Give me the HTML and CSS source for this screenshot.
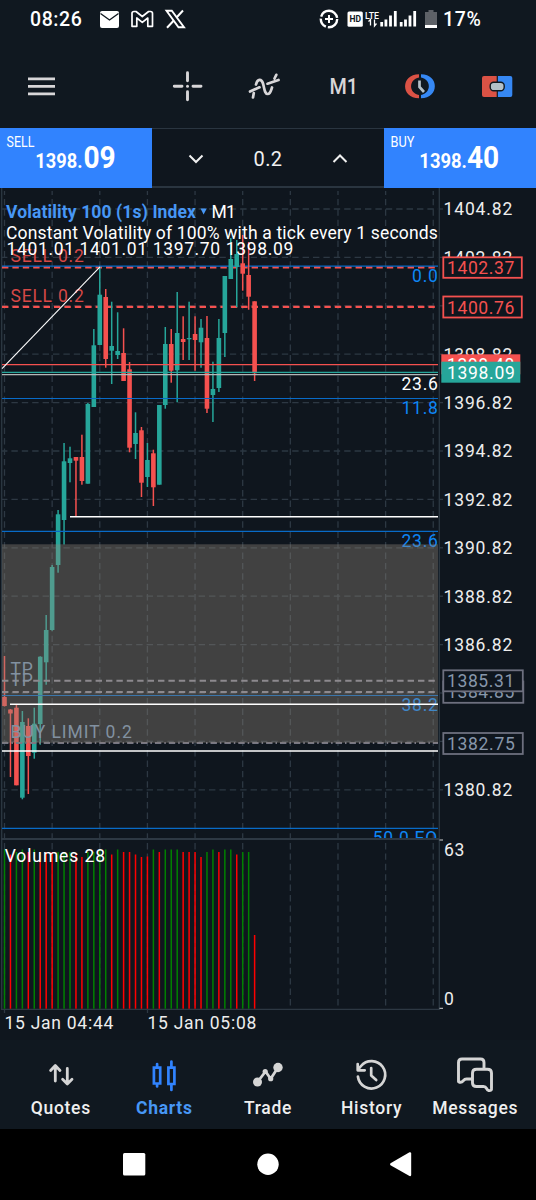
FILE: index.html
```html
<!DOCTYPE html>
<html lang="en">
<head>
    <meta charset="UTF-8">
    <meta name="viewport" content="width=device-width, initial-scale=1.0">
    <title>Charts</title>
    <link rel="stylesheet" href="styles.css">
</head>
<body>
    <div class="status-bar">
        <span class="clock">08:26</span>
        <svg class="notifications" width="86" height="20" viewBox="99 8 86 20">
            <rect x="100" y="10" width="19" height="17" rx="2" fill="#fff"/>
            <path d="M100.500 12.500 L109.500 19 L118.500 12.500" fill="none" stroke="#101820" stroke-width="1.400"/>
            <path d="M132 12.200 Q132 10.500 134 10.500 L136 10.500 L142.300 15.500 L148.600 10.500 L150.500 10.500 Q152.500 10.500 152.500 12.500 L152.500 25.300 L147.800 25.300 L147.800 17 L142.300 21.300 L136.800 17 L136.800 25.300 L132 25.300 Z" fill="none" stroke="#fff" stroke-width="1.700" stroke-linejoin="round"/>
            <path d="M166.500 9.800 H171.800 L184 26.200 H178.500 Z" fill="none" stroke="#fff" stroke-width="1.900"/>
            <path d="M183 9.500 L176.300 16.800 M173.800 19.500 L167 26.800" stroke="#fff" stroke-width="2"/>
        </svg>
        <svg class="signals" width="122" height="20" viewBox="318 8 122 20">
            <circle cx="329" cy="18" r="8.200" fill="none" stroke="#fff" stroke-width="2.400" stroke-dasharray="14 2 10 2 22 1.500"/>
            <path d="M325 18 H333 M329 14 V22" stroke="#fff" stroke-width="2"/>
            <rect x="347.500" y="10.500" width="15.300" height="15.300" rx="1.500" fill="#fff"/>
            <text x="355.200" y="21" class="hd">HD</text>
            <text x="365" y="17.800" class="lte" textLength="14" lengthAdjust="spacingAndGlyphs">LTE</text>
            <path d="M370.500 24.500 V18.500 L368.500 20.500 M374.500 18.500 V25 L376.500 22.500" fill="none" stroke="#fff" stroke-width="1.300"/>
            <path d="M381.700 25.500 V21 M385.900 25.500 V18.500 M390.500 25.500 V14.500 M395.300 25.500 V10 M401.200 25.500 V21 M405.500 25.500 V18.500 M410 25.500 V14.500 M414.700 25.500 V10" stroke="#fff" stroke-width="2.800"/>
            <path d="M425 11 H428.500 V9 H433.500 V11 H437 V24 H425 Z" fill="#5d6167"/>
            <rect x="425" y="24" width="12" height="3" fill="#fff"/>
        </svg>
        <span class="battery">17%</span>
    </div>

    <div class="toolbar">
        <svg width="28" height="32" viewBox="28 70 28 32">
            <path d="M28 78.900 H55 M28 86.400 H55 M28 93.900 H55" stroke="#d8d6d8" stroke-width="2.700"/>
        </svg>
        <svg width="32" height="32" viewBox="172 70 32 32">
            <path d="M187.500 72.700 V80.700 M187.500 91.700 V99.700 M174.300 86.300 H182 M193 86.300 H201" stroke="#d8d6d8" stroke-width="2.900" stroke-linecap="round"/>
            <circle cx="187.500" cy="86.300" r="1.500" fill="#d8d6d8"/>
        </svg>
        <svg width="34" height="32" viewBox="247 70 34 32">
            <path d="M250 91.500 L259.500 87.300 M253.800 93 L253 97.500 M256 84.500 C257.500 78.500 261.500 78.500 263 83.500 C264.500 88.500 264.500 94 267.800 94 C270.300 94 271 90.500 272 87.500 M267.500 83.700 L278.500 80 M274.500 78.500 L276.300 74.800" fill="none" stroke="#d8d6d8" stroke-width="2.700" stroke-linecap="round"/>
        </svg>
        <span class="timeframe">M1</span>
        <svg width="32" height="32" viewBox="404 70 32 32">
            <path d="M419 74.200 C400.500 74.200 400.500 98.300 419 98.300 V95 C408.500 93 408.500 79.500 419 77.500 Z" fill="#db5245"/>
            <path d="M421 74.200 C439.500 74.200 439.500 98.300 421 98.300 V95 C431.500 93 431.500 79.500 421 77.500 Z" fill="#3688f4"/>
            <path d="M419.500 80.500 V87 L424 92" fill="none" stroke="#b4c0c8" stroke-width="2.700"/>
        </svg>
        <svg width="32" height="32" viewBox="481 70 32 32">
            <path d="M496.700 76 H484 Q482 76 482 78 V95 Q482 97 484 97 H496.700 Z" fill="#db5245"/>
            <path d="M497.900 76 H510.300 Q512.300 76 512.300 78 V95 Q512.300 97 510.300 97 H497.900 Z" fill="#3688f4"/>
            <rect x="490.200" y="82.200" width="14" height="8.500" rx="3.500" fill="#b4c0c8" stroke="#101820" stroke-width="1.400"/>
        </svg>
    </div>

    <div class="trade-bar">
        <svg class="deal" width="152" height="60" viewBox="0 128 152 60">
            <text class="deal-label" x="6" y="147.300" textLength="28" lengthAdjust="spacingAndGlyphs">SELL</text>
            <text class="deal-price" x="35" y="167.900" textLength="47.500" lengthAdjust="spacingAndGlyphs">1398.</text>
            <text class="deal-pips" x="83.500" y="167.900" textLength="32.500" lengthAdjust="spacingAndGlyphs">09</text>
        </svg>
        <div class="lot">
            <svg width="16" height="12" viewBox="0 0 16 12"><path d="M1.500 2.500 L8 9 L14.500 2.500"/></svg>
            <span>0.2</span>
            <svg width="16" height="12" viewBox="0 0 16 12"><path d="M1.500 9 L8 2.500 L14.500 9"/></svg>
        </div>
        <svg class="deal" width="152" height="60" viewBox="384 128 152 60">
            <text class="deal-label" x="390" y="147.300" textLength="24" lengthAdjust="spacingAndGlyphs">BUY</text>
            <text class="deal-price" x="419" y="167.900" textLength="48" lengthAdjust="spacingAndGlyphs">1398.</text>
            <text class="deal-pips" x="467" y="167.900" textLength="32.500" lengthAdjust="spacingAndGlyphs">40</text>
        </svg>
    </div>

    <svg class="chart" width="536" height="852" viewBox="0 188 536 852">
        <defs>
            <clipPath id="pane"><rect x="0" y="188" width="439" height="650"/></clipPath>
        </defs>
        <g id="grid" class="grid"></g>
        <g class="frame">
            <path d="M1.700 188 V1009.300"/>
            <path d="M439.300 188 V1009.300"/>
            <path d="M1 838.900 H439" stroke-width="2"/>
            <path d="M1 1009.300 H440 M4.500 1009 V1013 M147.500 1009 V1013"/>
        </g>
        <path d="M439.500 840 H443 M439.500 1008.300 H443" stroke="#d0d0d0"/>

        <g id="volumes"></g>
        <g clip-path="url(#pane)">
            <!-- pending and open positions -->
            <path class="position" d="M2 267.400 H438 M2 306.900 H438"/>
            <path class="fib" d="M2 266.200 H438"/>
            <g class="label sell">
                <text x="10.500" y="262.300" textLength="74">SELL 0.2</text>
                <text x="10.500" y="301.500" textLength="74">SELL 0.2</text>
            </g>
            <g id="candles"></g>
            <path class="fib" d="M2 398.500 H438 M2 531.300 H438 M2 695.500 H438 M2 828.300 H438"/>
            <path class="ask" d="M2 364.600 H438"/>
            <path class="bid" d="M2 372.300 H438"/>
            <path d="M2 374.700 H438" stroke="#b4b8b8" stroke-width="1.300"/>
            <g class="label fib-label">
                <text x="438.500" y="281.500">0.0</text>
                <text x="438.500" y="413.900">11.8</text>
                <text x="438.500" y="546.500">23.6</text>
                <text x="438.500" y="711">38.2</text>
                <text x="438" y="843.500">50.0 EQ</text>
            </g>
            <path class="stops" d="M2 680.700 H438 M2 692 H438"/>
            <path class="limit" d="M2 743 H438"/>
            <rect class="zone" x="2" y="544.300" width="436" height="198.500"/>
            <g class="label order">
                <text x="10.500" y="674.700">TP</text>
                <text x="10.500" y="686.300">TP</text>
                <text x="10.500" y="738" textLength="122">BUY LIMIT 0.2</text>
            </g>
            <path class="level" d="M70 516.700 H438 M10 704.200 H438 M2 751 H438"/>
            <path d="M2 368.700 L100 266.800" stroke="#fff" stroke-width="1.100"/>
            <text class="label white" x="438.500" y="390.300" text-anchor="end">23.6</text>
        </g>

        <text class="symbol" x="6" y="217.500" textLength="190">Volatility 100 (1s) Index</text>
        <path d="M200.500 208.500 H206.800 L203.600 214.500 Z" fill="#4797f5"/>
        <text class="label white" x="211.500" y="217.500" textLength="25">M1</text>
        <text class="label white" x="6" y="239.300" textLength="432.500">Constant Volatility of 100% with a tick every 1 seconds</text>
        <text class="label white" x="6.500" y="254.700" textLength="287.500">1401.01 1401.01 1397.70 1398.09</text>
        <text class="label white" x="4.700" y="861.500" textLength="101">Volumes 28</text>

        <g id="scale" class="label scale"></g>
        <g class="label scale">
            <text x="444" y="856.300">63</text>
            <text x="444" y="1005">0</text>
            <text x="4.500" y="1029" textLength="109.500">15 Jan 04:44</text>
            <text x="147.500" y="1029" textLength="109.500">15 Jan 05:08</text>
        </g>

        <g class="label tag">
            <g class="tag-sell">
                <rect x="443.300" y="257.300" width="78.500" height="20.500"/>
                <text x="447" y="274" textLength="68">1402.37</text>
                <rect x="443.300" y="296.500" width="78.500" height="21"/>
                <text x="447" y="313.500" textLength="68">1400.76</text>
            </g>
            <rect x="441.300" y="354.300" width="79" height="20" fill="#f5514f"/>
            <text x="447" y="371" textLength="68" class="white">1398.40</text>
            <rect x="441.300" y="361.700" width="79" height="21" fill="#26a69a"/>
            <text x="447" y="378.500" textLength="68.500" class="white">1398.09</text>
            <g class="tag-order">
                <rect x="443.300" y="681.500" width="80" height="21.300"/>
                <text x="447" y="698.300" textLength="68">1384.85</text>
                <rect x="443.300" y="670.300" width="79.500" height="21"/>
                <text x="447" y="687.200" textLength="68">1385.31</text>
                <rect x="443.300" y="733" width="79.500" height="21"/>
                <text x="447" y="750" textLength="68.500">1382.75</text>
            </g>
        </g>
    </svg>

    <div class="tabs">
        <div class="tab">
            <svg width="40" height="40" viewBox="40.700 1055 40 40"><path d="M55 1081 V1066 M50.300 1070.500 L55 1065.500 L59.700 1070.500 M67 1068.500 V1084 M62.300 1079.300 L67 1084 L71.700 1079.300" stroke-width="2.800"/></svg>
            <span>Quotes</span>
        </div>
        <div class="tab active">
            <svg width="40" height="40" viewBox="144.300 1055 40 40"><path d="M154.200 1067.700 H160.500 V1083.500 H154.200 Z M168.700 1067.700 H174.700 V1084 H168.700 Z M157.400 1064 V1067 M157.400 1084 V1086.500 M171.700 1061.500 V1067 M171.700 1084.500 V1090" stroke-width="2.700" stroke-linecap="butt"/></svg>
            <span>Charts</span>
        </div>
        <div class="tab">
            <svg width="40" height="40" viewBox="248 1055 40 40"><path d="M257.500 1082 L265.500 1071.500 L270.700 1078.700 L278 1067.500" stroke-width="2.800"/><circle class="dot" cx="257.500" cy="1082" r="4.500"/><circle class="dot" cx="278" cy="1067.500" r="4.700"/><circle class="dot" cx="265.200" cy="1071.500" r="2.600"/><circle class="dot" cx="270.700" cy="1078.700" r="2.600"/></svg>
            <span>Trade</span>
        </div>
        <div class="tab">
            <svg width="40" height="40" viewBox="351.800 1055 40 40"><path d="M357.700 1076.500 A13.700 13.700 0 1 0 360.800 1066 L357.500 1070 M357.500 1064 V1070.300 H364.500 M371 1068 V1075.500 L376 1080" stroke-width="2.700"/></svg>
            <span>History</span>
        </div>
        <div class="tab">
            <svg width="40" height="40" viewBox="455 1055 40 40"><path d="M472 1079 H466.500 Q464.500 1079 463.500 1080.500 Q461 1083.500 458.500 1081.500 V1062.500 Q458.500 1059 462 1059 H480.500 Q484 1059 484 1062.500 V1069 M476.500 1069.300 H487.500 Q491.500 1069.300 491.500 1073 V1088 Q492 1091 488.500 1090.500 C486 1089.500 487 1086.500 483.500 1086.500 H476.500 Q472.500 1086.500 472.500 1083 V1073 Q472.500 1069.300 476.500 1069.300 Z" stroke-width="2.900"/></svg>
            <span>Messages</span>
        </div>
    </div>

    <div class="system-nav">
        <svg width="24" height="26" viewBox="0 0 24 26"><rect x="1" y="2" width="22.300" height="22.500" rx="1.500"/></svg>
        <svg width="24" height="26" viewBox="0 0 24 26"><circle cx="12" cy="13.200" r="10.700"/></svg>
        <svg width="24" height="26" viewBox="1.500 0 24 26"><path d="M2 12.300 L21 1.300 Q22.700 1 22.700 2.500 V24 Q22.700 25.500 21 25 L2 14.200 Q1 13.200 2 12.300 Z"/></svg>
    </div>

    <script src="script.js"></script>
</body>
</html>
```

FILE: styles.css
```css
body {
    margin: 0;
    width: 536px;
    height: 1200px;
    display: flex;
    flex-direction: column;
    overflow: hidden;
    background-color: #0f161e;
    color: #ffffff;
    font-family: Roboto, sans-serif;
}
svg {
    display: block;
    flex-shrink: 0;
    overflow: visible;
}
.status-bar {
    display: flex;
    align-items: center;
    height: 36px;
    box-sizing: border-box;
    padding: 1px 54px 0 30px;
    background-color: #101820;
    font-size: 19.5px;
    font-weight: 500;
}
.clock {
    width: 69px;
    padding-top: 2px;
    letter-spacing: 0.6px;
}
.signals {
    margin-left: auto;
}
.battery {
    width: 39px;
    margin-left: 3px;
    padding-top: 2px;
    letter-spacing: 0.7px;
}
.hd {
    font-size: 8.5px;
    font-weight: 700;
    fill: #101820;
    text-anchor: middle;
}
.lte {
    font-size: 8.5px;
    font-weight: 500;
    fill: #ffffff;
}
.toolbar {
    display: flex;
    align-items: center;
    height: 92px;
    box-sizing: border-box;
    padding: 8px 23px 0 28px;
    background-color: #101820;
}
.toolbar svg:nth-child(2) {
    margin-left: 116px;
}
.toolbar svg:nth-child(3) {
    margin-left: 43px;
}
.toolbar svg:nth-child(5) {
    margin-left: 48px;
}
.toolbar svg:nth-child(6) {
    margin-left: 45px;
}
.timeframe {
    width: 28px;
    margin-left: 47px;
    font-size: 22px;
    font-weight: 500;
    color: #d8d6d8;
    transform: scaleX(0.9);
}
.trade-bar {
    display: flex;
    height: 60px;
}
.deal {
    background-color: #3183fe;
    height: 59.5px;
}
.deal text {
    fill: #ffffff;
}
.deal-label {
    font-size: 14.5px;
}
.deal-price {
    font-size: 20px;
    font-weight: 700;
}
.deal-pips {
    font-size: 31.5px;
    font-weight: 700;
}
.lot {
    flex: 1;
    display: flex;
    justify-content: space-between;
    align-items: center;
    box-sizing: border-box;
    padding: 2px 36px 0;
    border-top: 1px solid #2a3540;
    border-bottom: 2px solid #2a3540;
    font-size: 20px;
    letter-spacing: 0.4px;
    color: #f0f0f0;
}
.lot path {
    fill: none;
    stroke: #f0f0f0;
    stroke-width: 2;
}
.chart {
    height: 852px;
}
.grid {
    stroke: #2d3843;
    stroke-width: 1.3;
    stroke-dasharray: 6.4 4;
}
.grid .tick {
    stroke-dasharray: none;
}
.frame {
    fill: none;
    stroke: #2d3843;
    stroke-width: 1.3;
}
.label {
    font-size: 17.5px;
    letter-spacing: 0.7px;
}
.white {
    fill: #ffffff;
}
.scale {
    fill: #ededed;
}
.sell {
    fill: #d64846;
}
.fib {
    stroke: #086bc8;
    stroke-width: 1.2;
}
.fib-label {
    fill: #0e86f5;
    text-anchor: end;
}
.order {
    fill: #8291a0;
}
.position {
    stroke: #f5514f;
    stroke-width: 2.2;
    stroke-dasharray: 6.4 4;
}
.ask {
    stroke: #f5514f;
    stroke-width: 1.4;
}
.bid {
    stroke: #26a69a;
    stroke-width: 1.3;
}
.stops {
    stroke: #898999;
    stroke-width: 2;
    stroke-dasharray: 6.4 4;
}
.limit {
    stroke: #777784;
    stroke-width: 1.8;
    stroke-dasharray: 6.4 3 1.5 3;
}
.level {
    stroke: #ffffff;
    stroke-width: 1.5;
}
.zone {
    fill: rgba(147, 138, 124, 0.38);
}
.up {
    fill: #26a69a;
}
.down {
    fill: #f5514f;
}
.vol-up {
    fill: #008000;
}
.vol-down {
    fill: #ff0000;
}
.symbol {
    font-size: 17.5px;
    font-weight: 700;
    fill: #4797f5;
}
.tag rect {
    stroke-width: 1.8;
}
.tag-sell rect {
    fill: #0f161e;
    stroke: #f5514f;
}
.tag-sell text {
    fill: #f5514f;
}
.tag-order rect {
    fill: #0f161e;
    stroke: #6d6f7e;
}
.tag-order text {
    fill: #8797ab;
}
.tabs {
    display: flex;
    height: 88.5px;
    box-sizing: border-box;
    padding: 15px 9px 0;
    background-color: #101820;
}
.tab {
    flex: 1;
    display: flex;
    flex-direction: column;
    align-items: center;
    gap: 3px;
    font-size: 17.5px;
    font-weight: 500;
    letter-spacing: 0.7px;
    color: #efefef;
}
.tab path {
    fill: none;
    stroke: #d5d5d5;
    stroke-linecap: round;
    stroke-linejoin: round;
}
.tab .dot {
    fill: #d5d5d5;
}
.tab.active {
    color: #4797f5;
    font-weight: 700;
}
.tab.active path {
    stroke: #3183fe;
    stroke-linejoin: miter;
}
.system-nav {
    display: flex;
    justify-content: center;
    align-items: center;
    gap: 110px;
    flex: 1;
    box-sizing: border-box;
    padding-bottom: 1px;
    background-color: #000000;
}
.system-nav svg {
    fill: #ffffff;
}
```

FILE: script.js
```js
// [direction, high, body top, body bottom, low, volume top]
const bars = [
    ['down', 656, 697, 706, 706.5, 849.5],
    ['down', 709, 709.5, 713.5, 777, 854.5],
    ['down', 705, 707.7, 785.3, 785.3, 852],
    ['up', 711, 722, 797.7, 799.3, 849.5],
    ['down', 718.3, 726, 756, 794, 852],
    ['up', 707.7, 723.7, 752.7, 758.7, 849.5],
    ['up', 656.3, 656.7, 724, 744.7, 852],
    ['up', 615, 630, 662.3, 684.7, 852],
    ['up', 565, 567, 630, 630.7, 852],
    ['up', 510, 514.3, 565, 572.7, 852],
    ['up', 443, 461.3, 520, 544.5, 852],
    ['up', 446.7, 458.3, 463, 482.3, 852],
    ['down', 457, 457, 460.7, 516, 854.5],
    ['down', 434.7, 457, 481, 484.7, 857],
    ['up', 403, 404, 483.7, 483.7, 852],
    ['up', 329, 345.3, 407, 407, 852],
    ['up', 266.7, 294.7, 345, 345, 849.5],
    ['down', 289, 297, 359, 367.7, 849.5],
    ['up', 301.7, 346, 350.7, 384, 854.5],
    ['up', 312.3, 351, 355, 359, 849.5],
    ['down', 328.3, 353, 381, 381, 852],
    ['down', 362, 369.3, 447.7, 452.3, 852],
    ['up', 412.3, 433, 444, 459, 854.5],
    ['down', 427, 430.3, 482.7, 497, 857],
    ['up', 443, 460, 477, 487, 856.5],
    ['down', 449.7, 453.3, 487.3, 506, 849.5],
    ['up', 405, 405, 484.7, 484.7, 852],
    ['up', 327, 344, 405, 408.7, 849.5],
    ['down', 329, 344, 370.7, 382.7, 849.5],
    ['up', 292, 333, 370.3, 402.3, 849.5],
    ['down', 316.3, 339, 342, 360, 852],
    ['up', 301.7, 338, 339.3, 360, 852],
    ['down', 316.3, 334, 340, 370.7, 852],
    ['up', 319, 327.7, 342.3, 367.7, 857],
    ['down', 316, 338, 408.7, 413, 852],
    ['up', 361.7, 389, 395, 422, 849.5],
    ['up', 319, 338, 388, 392, 852],
    ['up', 276, 276, 333, 357, 849.5],
    ['up', 238, 259, 279, 279, 849.5],
    ['up', 240, 254, 267, 307.3, 854.5],
    ['down', 235, 263.3, 273.7, 290.7, 852],
    ['down', 242, 275, 296.7, 309.7, 852],
    ['down', 301.3, 301.3, 373.3, 381, 935]
];

// g = volume grew, r = volume fell
const volumeColors = 'grggrgrrrgggrrggggrgrrrrrgrgggrrrrggrggrggr';

const NS = 'http://www.w3.org/2000/svg';

function add(parent, tag, attrs, text) {
    const el = document.createElementNS(NS, tag);
    for (const key in attrs) {
        el.setAttribute(key, attrs[key]);
    }
    if (text) {
        el.textContent = text;
    }
    document.getElementById(parent).appendChild(el);
}

function box(parent, cls, x, width, top, bottom) {
    add(parent, 'rect', { class: cls, x: x - width / 2, y: top, width: width, height: bottom - top });
}

// vertical grid lines, price pane and volume pane
for (let i = 0; i < 10; i++) {
    const x = 4.5 + i * 47.64;
    add('grid', 'path', { d: `M${x} 191 V838`, 'stroke-dashoffset': 2.5 });
    add('grid', 'path', { d: `M${x} 843 V1008` });
}

// horizontal grid lines with price labels
for (let i = 0; i < 13; i++) {
    const y = 209 + i * 48.4;
    const price = (1404.82 - i * 2).toFixed(2);
    add('grid', 'path', { d: `M2 ${y} H438`, 'stroke-dashoffset': 1 });
    add('grid', 'path', { d: `M439 ${y} H443`, class: 'tick' });
    if (i !== 2 && i !== 10 && i !== 11) {
        add('scale', 'text', { x: 443.5, y: y + 6.4, textLength: 69.5 }, price);
    }
}

bars.forEach((bar, i) => {
    const [dir, high, top, bottom, low, volume] = bar;
    const x = 4.5 + i * 5.955;
    box('candles', dir, x, 1.5, high, low);
    box('candles', dir, x, 4.6, top, bottom);
    box('volumes', volumeColors[i] === 'g' ? 'vol-up' : 'vol-down', x, 1.5, volume, 1008.7);
});
```
